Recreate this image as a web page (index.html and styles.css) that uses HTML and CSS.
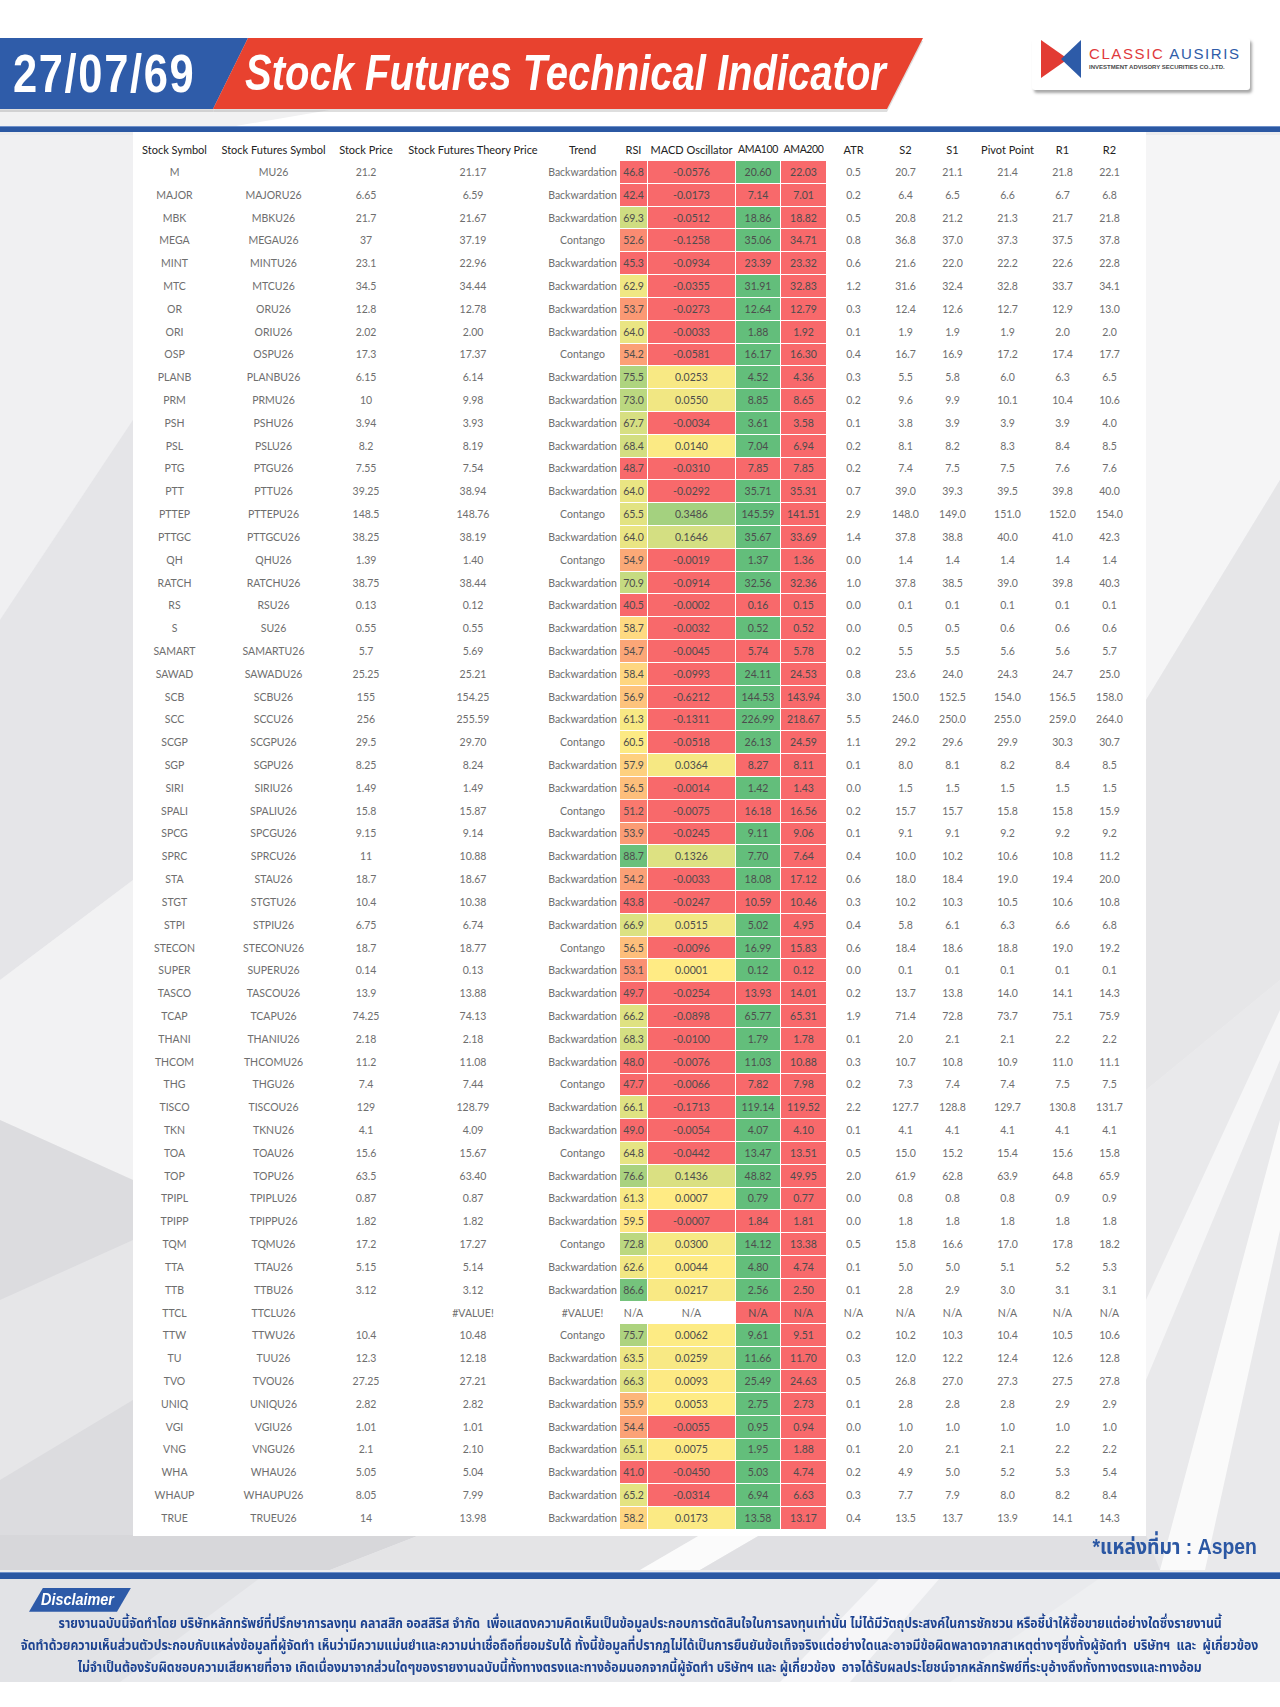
FILE: index.html
```html
<!DOCTYPE html>
<html lang="th">
<head>
<meta charset="utf-8">
<title>Stock Futures Technical Indicator</title>
<link rel="stylesheet" href="styles.css">
</head>
<body>
<div class="page">
  <svg class="backdrop" viewBox="0 0 1280 1707" preserveAspectRatio="none" aria-hidden="true">
    <rect x="0" y="0" width="1280" height="127" fill="#ffffff"/>
    <polygon points="0,110 330,110 230,127 0,127" fill="#f1f1f2"/>
    <polygon points="0,135 133,135 133,420 0,620" fill="#f0f0f2"/>
    <polygon points="0,620 133,420 133,880 0,980" fill="#e5e5e8"/>
    <polygon points="0,980 133,880 133,1180 0,1120" fill="#f2f2f3"/>
    <polygon points="0,1120 133,1180 133,1570 0,1570" fill="#dcdcdf"/>
    <polygon points="0,1300 133,1240 133,1400 0,1480" fill="#e6e6e8"/>
    <polygon points="1146,135 1280,135 1280,480 1146,700" fill="#f5f5f6"/>
    <polygon points="1146,700 1280,480 1280,980 1146,1090" fill="#e6e6e8"/>
    <polygon points="1146,1090 1280,980 1280,1570 1146,1570" fill="#e9e9eb"/>
    <polygon points="1160,1570 1280,1120 1280,1230 1205,1570" fill="#fafafa"/>
    <polygon points="1146,1300 1280,1010 1280,1060 1146,1380" fill="#f6f6f7"/>
    <polygon points="0,1535 420,1535 330,1570 0,1570" fill="#d7d7da"/>
    <polygon points="420,1535 700,1535 640,1570 330,1570" fill="#e4e4e6"/>
    <polygon points="700,1535 760,1535 700,1570 640,1570" fill="#fbfbfb"/>
    <polygon points="760,1535 1146,1535 1160,1570 700,1570" fill="#e0e0e3"/>
    <rect x="0" y="1578" width="1280" height="104" fill="#e9eaed"/>
    <polygon points="0,1578 260,1578 120,1682 0,1682" fill="#e2e3e6"/>
    <polygon points="780,1682 880,1578 940,1578 850,1682" fill="#f6f6f8"/>
    <polygon points="950,1682 1100,1578 1280,1578 1280,1682" fill="#eeeff1"/>
    <rect x="0" y="1682" width="1280" height="25" fill="#ffffff"/>
  </svg>

  <header class="top">
    <div class="banner">
      <div class="date"><span>27/07/69</span></div>
      <div class="title"><span>Stock Futures Technical Indicator</span></div>
    </div>
    <div class="logo">
      <svg class="logo-mark" width="40" height="38" viewBox="0 0 40 38" aria-hidden="true">
        <polygon points="0,0 27,19 0,38" fill="#e23b33"/>
        <polygon points="40,0 40,38 20,19" fill="#2d5ba8"/>
      </svg>
      <div class="logo-text">
        <div class="logo-name"><span class="lr">CLASSIC</span> <span class="lb">AUSIRIS</span></div>
        <div class="logo-sub">INVESTMENT ADVISORY SECURITIES CO.,LTD.</div>
      </div>
    </div>
  </header>

  <div class="rule"></div>

  <main class="panel">
    <table class="grid">
      <colgroup>
        <col class="w-ss"><col class="w-fs"><col class="w-sp"><col class="w-tp"><col class="w-tr">
        <col class="w-rsi"><col class="w-macd"><col class="w-a100"><col class="w-a200">
        <col class="w-atr"><col class="w-s2"><col class="w-s1"><col class="w-pp"><col class="w-r1"><col class="w-r2">
      </colgroup>
      <thead>
        <tr>
          <th>Stock Symbol</th><th>Stock Futures Symbol</th><th>Stock Price</th><th>Stock Futures Theory Price</th><th>Trend</th>
          <th>RSI</th><th>MACD Oscillator</th><th class="tight">AMA100</th><th class="tight">AMA200</th>
          <th>ATR</th><th>S2</th><th>S1</th><th>Pivot Point</th><th>R1</th><th>R2</th>
        </tr>
      </thead>
      <tbody id="rows"></tbody>
    </table>
  </main>

  <div class="source"><span>*แหล่งที่มา : Aspen</span></div>

  <footer class="disclaimer">
    <div class="rule thick"></div>
    <div class="disc-body">
      <div class="disc-label"><span>Disclaimer</span></div>
      <p><span>รายงานฉบับนี้จัดทำโดย บริษัทหลักทรัพย์ที่ปรึกษาการลงทุน คลาสสิก ออสสิริส จำกัด&nbsp; เพื่อแสดงความคิดเห็นเป็นข้อมูลประกอบการตัดสินใจในการลงทุนเท่านั้น ไม่ได้มีวัตถุประสงค์ในการชักชวน หรือชี้นำให้ซื้อขายแต่อย่างใดซึ่งรายงานนี้</span></p>
      <p><span>จัดทำด้วยความเห็นส่วนตัวประกอบกับแหล่งข้อมูลที่ผู้จัดทำ เห็นว่ามีความแม่นยำและความน่าเชื่อถือที่ยอมรับได้ ทั้งนี้ข้อมูลที่ปรากฏไม่ได้เป็นการยืนยันข้อเท็จจริงแต่อย่างใดและอาจมีข้อผิดพลาดจากสาเหตุต่างๆซึ่งทั้งผู้จัดทำ&nbsp; บริษัทฯ&nbsp; และ&nbsp; ผู้เกี่ยวข้อง</span></p>
      <p><span>ไม่จำเป็นต้องรับผิดชอบความเสียหายที่อาจ เกิดเนื่องมาจากส่วนใดๆของรายงานฉบับนี้ทั้งทางตรงและทางอ้อมนอกจากนี้ผู้จัดทำ บริษัทฯ และ ผู้เกี่ยวข้อง&nbsp; อาจได้รับผลประโยชน์จากหลักทรัพย์ที่ระบุอ้างถึงทั้งทางตรงและทางอ้อม</span></p>
    </div>
  </footer>
</div>
<script src="script.js"></script>
</body>
</html>
```

FILE: styles.css
```css
* { box-sizing: border-box; }
html, body { margin: 0; padding: 0; }
body { background: #ffffff; font-family: Lato, "Noto Sans", sans-serif; }

.page {
  position: relative;
  width: 1280px;
  height: 1707px;
  overflow: hidden;
  background: #ececee;
}
.backdrop { position: absolute; left: 0; top: 0; width: 1280px; height: 1707px; z-index: 0; }
.top, .rule, .panel, .source, .disclaimer { position: relative; z-index: 1; }

/* ---------- header ---------- */
.top {
  display: flex;
  justify-content: space-between;
  align-items: flex-start;
  height: 109px;
  padding-top: 38px;
}
.banner {
  display: flex;
  height: 71px;
  filter: drop-shadow(0 3px 0 rgba(0, 0, 0, 0.13));
}
.date, .title {
  height: 71px;
  color: #ffffff;
  font-family: "Liberation Sans", Arial, sans-serif;
  font-weight: 700;
  line-height: 71px;
  white-space: nowrap;
  overflow: hidden;
}
.date span, .title span {
  display: inline-block;
  transform-origin: left center;
}
.date {
  width: 248px;
  background: #2f5ca9;
  clip-path: polygon(0 0, 100% 0, calc(100% - 35px) 100%, 0 100%);
  font-size: 53px;
  letter-spacing: 2px;
  padding-left: 13px;
}
.date span { transform: scaleX(0.82); }
.title {
  width: 710px;
  margin-left: -35px;
  background: #e8422f;
  clip-path: polygon(35px 0, 100% 0, calc(100% - 36px) 100%, 0 100%);
  font-style: italic;
  font-size: 50px;
  padding-left: 32px;
}
.title span { transform: scaleX(0.8); }

.logo {
  display: flex;
  align-items: flex-start;
  gap: 8px;
  width: 218px;
  height: 52px;
  margin-right: 30px;
  padding: 2px 0 0 9px;
  background: #ffffff;
  border-radius: 3px;
  box-shadow: 2px 3px 3px rgba(0, 0, 0, 0.35);
}
.logo-mark { flex: none; }
.logo-text { margin-top: 6px; font-family: "Liberation Sans", Arial, sans-serif; }
.logo-name { font-size: 15px; line-height: 15px; letter-spacing: 1.6px; white-space: nowrap; }
.lr { color: #e0393b; }
.lb { color: #2e5ca8; }
.logo-sub {
  margin-top: 2px;
  font-size: 6px;
  line-height: 8px;
  font-weight: 700;
  color: #4a4a4a;
  white-space: nowrap;
}

.rule {
  height: 6px;
  margin-top: 17px;
  background: linear-gradient(#6e90c9 0 1px, #2b58a3 1px);
}

/* ---------- table ---------- */
.panel {
  width: 1013px;
  margin-left: 133px;
  padding: 5px 12px 6px 0;
  background: #ffffff;
}
.grid {
  width: 1001px;
  table-layout: fixed;
  border-collapse: collapse;
}
.w-ss { width: 82px; }
.w-fs { width: 116px; }
.w-sp { width: 69px; }
.w-tp { width: 145px; }
.w-tr { width: 74px; }
.w-rsi { width: 28px; }
.w-macd { width: 88px; }
.w-a100 { width: 45px; }
.w-a200 { width: 46px; }
.w-atr { width: 54px; }
.w-s2 { width: 50px; }
.w-s1 { width: 44px; }
.w-pp { width: 66px; }
.w-r1 { width: 44px; }
.w-r2 { width: 50px; }

.grid th {
  height: 23px;
  padding: 0;
  border: 1px solid #ffffff;
  font-weight: 400;
  font-size: 11px;
  color: #222222;
  text-align: center;
  white-space: nowrap;
}
.grid th.tight { letter-spacing: -0.4px; font-size: 10.5px; }
.grid td {
  height: 22.82px;
  padding: 0;
  border: 1px solid #ffffff;
  font-size: 10.5px;
  color: #6e6e6e;
  text-align: center;
  white-space: nowrap;
}
.grid td.hot { color: #4d4d4d; }
.grid td.up { background: #63be7b; }
.grid td.down { background: #f8696b; }

/* ---------- source ---------- */
.source {
  height: 22px;
  padding-right: 23px;
  text-align: right;
  font-family: "Liberation Sans", "Noto Sans Thai", sans-serif;
  font-weight: 700;
  font-size: 22px;
  line-height: 22px;
  color: #2b57a3;
}
.source span { display: inline-block; transform: scaleX(0.88); transform-origin: right center; }

/* ---------- disclaimer ---------- */
.disclaimer { margin-top: 14px; }
.rule.thick { height: 7px; margin-top: 0; }
.disc-body { height: 104px; padding-top: 9px; }
.disc-label {
  width: 102px;
  height: 24px;
  margin-left: 29px;
  background: #2d5aa8;
  clip-path: polygon(14px 0, 100% 0, calc(100% - 14px) 100%, 0 100%);
  color: #ffffff;
  font-family: "Liberation Sans", Arial, sans-serif;
  font-weight: 700;
  font-style: italic;
  font-size: 16px;
  line-height: 24px;
  padding-left: 12px;
  white-space: nowrap;
}
.disc-label span { display: inline-block; transform: scaleX(0.9); transform-origin: left center; }
.disc-body p {
  display: flex;
  justify-content: center;
  margin: 0;
  white-space: nowrap;
  font-family: "Noto Sans Thai", "Noto Sans Thai UI", sans-serif;
  font-weight: 700;
  font-size: 14px;
  line-height: 22px;
  color: #1d4391;
}
.disc-body p span { flex: none; display: block; transform: scaleX(0.877); }
.disc-body p:first-of-type { margin-top: 1px; }
```

FILE: script.js
```js
(function () {
  var data = [
    "M|MU26|21.2|21.17|Backwardation|46.8|-0.0576|20.60|22.03|0.5|20.7|21.1|21.4|21.8|22.1",
    "MAJOR|MAJORU26|6.65|6.59|Backwardation|42.4|-0.0173|7.14|7.01|0.2|6.4|6.5|6.6|6.7|6.8",
    "MBK|MBKU26|21.7|21.67|Backwardation|69.3|-0.0512|18.86|18.82|0.5|20.8|21.2|21.3|21.7|21.8",
    "MEGA|MEGAU26|37|37.19|Contango|52.6|-0.1258|35.06|34.71|0.8|36.8|37.0|37.3|37.5|37.8",
    "MINT|MINTU26|23.1|22.96|Backwardation|45.3|-0.0934|23.39|23.32|0.6|21.6|22.0|22.2|22.6|22.8",
    "MTC|MTCU26|34.5|34.44|Backwardation|62.9|-0.0355|31.91|32.83|1.2|31.6|32.4|32.8|33.7|34.1",
    "OR|ORU26|12.8|12.78|Backwardation|53.7|-0.0273|12.64|12.79|0.3|12.4|12.6|12.7|12.9|13.0",
    "ORI|ORIU26|2.02|2.00|Backwardation|64.0|-0.0033|1.88|1.92|0.1|1.9|1.9|1.9|2.0|2.0",
    "OSP|OSPU26|17.3|17.37|Contango|54.2|-0.0581|16.17|16.30|0.4|16.7|16.9|17.2|17.4|17.7",
    "PLANB|PLANBU26|6.15|6.14|Backwardation|75.5|0.0253|4.52|4.36|0.3|5.5|5.8|6.0|6.3|6.5",
    "PRM|PRMU26|10|9.98|Backwardation|73.0|0.0550|8.85|8.65|0.2|9.6|9.9|10.1|10.4|10.6",
    "PSH|PSHU26|3.94|3.93|Backwardation|67.7|-0.0034|3.61|3.58|0.1|3.8|3.9|3.9|3.9|4.0",
    "PSL|PSLU26|8.2|8.19|Backwardation|68.4|0.0140|7.04|6.94|0.2|8.1|8.2|8.3|8.4|8.5",
    "PTG|PTGU26|7.55|7.54|Backwardation|48.7|-0.0310|7.85|7.85|0.2|7.4|7.5|7.5|7.6|7.6",
    "PTT|PTTU26|39.25|38.94|Backwardation|64.0|-0.0292|35.71|35.31|0.7|39.0|39.3|39.5|39.8|40.0",
    "PTTEP|PTTEPU26|148.5|148.76|Contango|65.5|0.3486|145.59|141.51|2.9|148.0|149.0|151.0|152.0|154.0",
    "PTTGC|PTTGCU26|38.25|38.19|Backwardation|64.0|0.1646|35.67|33.69|1.4|37.8|38.8|40.0|41.0|42.3",
    "QH|QHU26|1.39|1.40|Contango|54.9|-0.0019|1.37|1.36|0.0|1.4|1.4|1.4|1.4|1.4",
    "RATCH|RATCHU26|38.75|38.44|Backwardation|70.9|-0.0914|32.56|32.36|1.0|37.8|38.5|39.0|39.8|40.3",
    "RS|RSU26|0.13|0.12|Backwardation|40.5|-0.0002|0.16|0.15|0.0|0.1|0.1|0.1|0.1|0.1",
    "S|SU26|0.55|0.55|Backwardation|58.7|-0.0032|0.52|0.52|0.0|0.5|0.5|0.6|0.6|0.6",
    "SAMART|SAMARTU26|5.7|5.69|Backwardation|54.7|-0.0045|5.74|5.78|0.2|5.5|5.5|5.6|5.6|5.7",
    "SAWAD|SAWADU26|25.25|25.21|Backwardation|58.4|-0.0993|24.11|24.53|0.8|23.6|24.0|24.3|24.7|25.0",
    "SCB|SCBU26|155|154.25|Backwardation|56.9|-0.6212|144.53|143.94|3.0|150.0|152.5|154.0|156.5|158.0",
    "SCC|SCCU26|256|255.59|Backwardation|61.3|-0.1311|226.99|218.67|5.5|246.0|250.0|255.0|259.0|264.0",
    "SCGP|SCGPU26|29.5|29.70|Contango|60.5|-0.0518|26.13|24.59|1.1|29.2|29.6|29.9|30.3|30.7",
    "SGP|SGPU26|8.25|8.24|Backwardation|57.9|0.0364|8.27|8.11|0.1|8.0|8.1|8.2|8.4|8.5",
    "SIRI|SIRIU26|1.49|1.49|Backwardation|56.5|-0.0014|1.42|1.43|0.0|1.5|1.5|1.5|1.5|1.5",
    "SPALI|SPALIU26|15.8|15.87|Contango|51.2|-0.0075|16.18|16.56|0.2|15.7|15.7|15.8|15.8|15.9",
    "SPCG|SPCGU26|9.15|9.14|Backwardation|53.9|-0.0245|9.11|9.06|0.1|9.1|9.1|9.2|9.2|9.2",
    "SPRC|SPRCU26|11|10.88|Backwardation|88.7|0.1326|7.70|7.64|0.4|10.0|10.2|10.6|10.8|11.2",
    "STA|STAU26|18.7|18.67|Backwardation|54.2|-0.0033|18.08|17.12|0.6|18.0|18.4|19.0|19.4|20.0",
    "STGT|STGTU26|10.4|10.38|Backwardation|43.8|-0.0247|10.59|10.46|0.3|10.2|10.3|10.5|10.6|10.8",
    "STPI|STPIU26|6.75|6.74|Backwardation|66.9|0.0515|5.02|4.95|0.4|5.8|6.1|6.3|6.6|6.8",
    "STECON|STECONU26|18.7|18.77|Contango|56.5|-0.0096|16.99|15.83|0.6|18.4|18.6|18.8|19.0|19.2",
    "SUPER|SUPERU26|0.14|0.13|Backwardation|53.1|0.0001|0.12|0.12|0.0|0.1|0.1|0.1|0.1|0.1",
    "TASCO|TASCOU26|13.9|13.88|Backwardation|49.7|-0.0254|13.93|14.01|0.2|13.7|13.8|14.0|14.1|14.3",
    "TCAP|TCAPU26|74.25|74.13|Backwardation|66.2|-0.0898|65.77|65.31|1.9|71.4|72.8|73.7|75.1|75.9",
    "THANI|THANIU26|2.18|2.18|Backwardation|68.3|-0.0100|1.79|1.78|0.1|2.0|2.1|2.1|2.2|2.2",
    "THCOM|THCOMU26|11.2|11.08|Backwardation|48.0|-0.0076|11.03|10.88|0.3|10.7|10.8|10.9|11.0|11.1",
    "THG|THGU26|7.4|7.44|Contango|47.7|-0.0066|7.82|7.98|0.2|7.3|7.4|7.4|7.5|7.5",
    "TISCO|TISCOU26|129|128.79|Backwardation|66.1|-0.1713|119.14|119.52|2.2|127.7|128.8|129.7|130.8|131.7",
    "TKN|TKNU26|4.1|4.09|Backwardation|49.0|-0.0054|4.07|4.10|0.1|4.1|4.1|4.1|4.1|4.1",
    "TOA|TOAU26|15.6|15.67|Contango|64.8|-0.0442|13.47|13.51|0.5|15.0|15.2|15.4|15.6|15.8",
    "TOP|TOPU26|63.5|63.40|Backwardation|76.6|0.1436|48.82|49.95|2.0|61.9|62.8|63.9|64.8|65.9",
    "TPIPL|TPIPLU26|0.87|0.87|Backwardation|61.3|0.0007|0.79|0.77|0.0|0.8|0.8|0.8|0.9|0.9",
    "TPIPP|TPIPPU26|1.82|1.82|Backwardation|59.5|-0.0007|1.84|1.81|0.0|1.8|1.8|1.8|1.8|1.8",
    "TQM|TQMU26|17.2|17.27|Contango|72.8|0.0300|14.12|13.38|0.5|15.8|16.6|17.0|17.8|18.2",
    "TTA|TTAU26|5.15|5.14|Backwardation|62.6|0.0044|4.80|4.74|0.1|5.0|5.0|5.1|5.2|5.3",
    "TTB|TTBU26|3.12|3.12|Backwardation|86.6|0.0217|2.56|2.50|0.1|2.8|2.9|3.0|3.1|3.1",
    "TTCL|TTCLU26||#VALUE!|#VALUE!|N/A|N/A|N/A|N/A|N/A|N/A|N/A|N/A|N/A|N/A",
    "TTW|TTWU26|10.4|10.48|Contango|75.7|0.0062|9.61|9.51|0.2|10.2|10.3|10.4|10.5|10.6",
    "TU|TUU26|12.3|12.18|Backwardation|63.5|0.0259|11.66|11.70|0.3|12.0|12.2|12.4|12.6|12.8",
    "TVO|TVOU26|27.25|27.21|Backwardation|66.3|0.0093|25.49|24.63|0.5|26.8|27.0|27.3|27.5|27.8",
    "UNIQ|UNIQU26|2.82|2.82|Backwardation|55.9|0.0053|2.75|2.73|0.1|2.8|2.8|2.8|2.9|2.9",
    "VGI|VGIU26|1.01|1.01|Backwardation|54.4|-0.0055|0.95|0.94|0.0|1.0|1.0|1.0|1.0|1.0",
    "VNG|VNGU26|2.1|2.10|Backwardation|65.1|0.0075|1.95|1.88|0.1|2.0|2.1|2.1|2.2|2.2",
    "WHA|WHAU26|5.05|5.04|Backwardation|41.0|-0.0450|5.03|4.74|0.2|4.9|5.0|5.2|5.3|5.4",
    "WHAUP|WHAUPU26|8.05|7.99|Backwardation|65.2|-0.0314|6.94|6.63|0.3|7.7|7.9|8.0|8.2|8.4",
    "TRUE|TRUEU26|14|13.98|Backwardation|58.2|0.0173|13.58|13.17|0.4|13.5|13.7|13.9|14.1|14.3"
  ];

  var RED = [248, 105, 107], YEL = [255, 235, 132], GRN = [99, 190, 123];
  function mix(a, b, t) {
    t = Math.max(0, Math.min(1, t));
    return "rgb(" + [0, 1, 2].map(function (i) { return Math.round(a[i] + (b[i] - a[i]) * t); }).join(",") + ")";
  }
  function rsiColor(v) {
    if (v <= 50) return mix(RED, RED, 0);
    if (v < 60) return mix(RED, YEL, (v - 50) / 10);
    return mix(YEL, GRN, (v - 60) / 30);
  }
  function macdColor(v) {
    if (v < 0) return mix(RED, RED, 0);
    return mix(YEL, GRN, v / 0.6);
  }

  var body = document.getElementById("rows");
  data.forEach(function (line) {
    var f = line.split("|");
    var tr = document.createElement("tr");
    f.forEach(function (val, i) {
      var td = document.createElement("td");
      td.textContent = val;
      var price = parseFloat(f[2]);
      var num = parseFloat(val);
      if (i === 5 && !isNaN(num)) { td.className = "hot"; td.style.backgroundColor = rsiColor(num); }
      if (i === 6 && !isNaN(num)) { td.className = "hot"; td.style.backgroundColor = macdColor(num); }
      if (i === 7) { td.className = "hot " + (!isNaN(num) && price > num ? "up" : "down"); }
      if (i === 8) { td.className = "hot down"; }
      tr.appendChild(td);
    });
    body.appendChild(tr);
  });
})();
```
